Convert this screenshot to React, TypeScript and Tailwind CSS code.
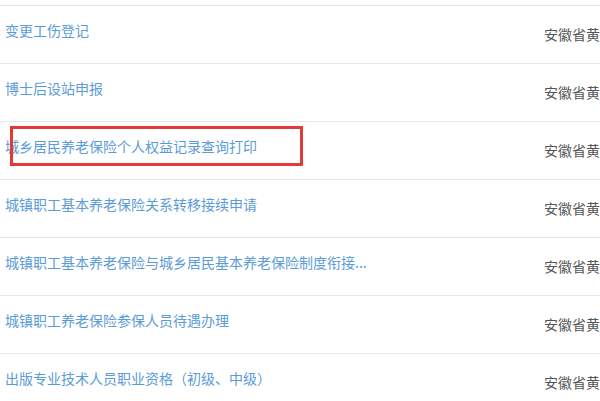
import React from 'react'

const items = [
  '变更工伤登记',
  '博士后设站申报',
  '城乡居民养老保险个人权益记录查询打印',
  '城镇职工基本养老保险关系转移接续申请',
  '城镇职工基本养老保险与城乡居民基本养老保险制度衔接...',
  '城镇职工养老保险参保人员待遇办理',
  '出版专业技术人员职业资格（初级、中级）',
]

export default function App() {
  return (
    <div
      className="w-[600px] h-[401px] overflow-hidden bg-white"
      style={{ fontFamily: '"Microsoft YaHei", "Noto Sans CJK SC", sans-serif' }}
    >
      {/* tail of the row scrolled above */}
      <div className="h-[6px] border-b border-[#e8e8e8]" />
      {items.map((name, i) => (
        <div key={name} className="relative h-[58px] border-b border-[#e8e8e8] flex">
          <a className="w-[544px] shrink-0 pl-[5px] pt-[14px] text-[14px] leading-[20px] text-[#5b9bd8] whitespace-nowrap cursor-pointer">
            {name}
          </a>
          <div className="w-[56px] pt-[18px] text-[14px] leading-[20px] text-[#555] whitespace-nowrap">
            安徽省黄
          </div>
          {i === 2 && (
            <div className="absolute left-[10px] top-[4px] w-[293px] h-[40px] border-[3px] border-[#e53935]" />
          )}
        </div>
      ))}
    </div>
  )
}
